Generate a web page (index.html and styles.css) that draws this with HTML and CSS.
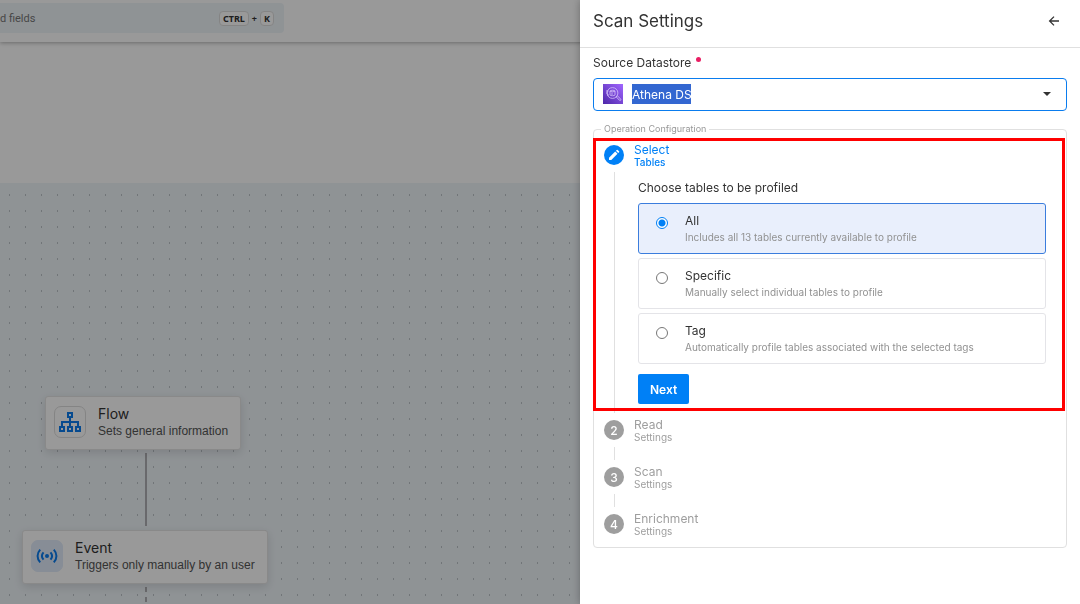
FILE: index.html
```html
<!DOCTYPE html>
<html lang="en">
<head>
<meta charset="utf-8">
<meta name="viewport" content="width=device-width, initial-scale=1">
<title>Scan Settings</title>
<link rel="stylesheet" href="styles.css">
</head>
<body>
<div class="page">
  <header class="topbar">
    <div class="search">
      <span class="search-text">d fields</span>
      <span class="shortcut"><kbd>CTRL</kbd><span>+</span><kbd>K</kbd></span>
    </div>
  </header>
  <div class="summary"></div>
  <main class="canvas">
    <div class="link"></div>
    <div class="link link-next"></div>
    <article class="node node-flow">
      <span class="node-icon">
        <svg width="24" height="24" viewBox="0 0 24 24" fill="none" stroke="currentColor" stroke-width="2"><path d="M10 3h4v4h-4zM2 17h4v4H2zM10 17h4v4h-4zM18 17h4v4h-4zM12 7v10M4 17v-5h16v5"/></svg>
      </span>
      <div><h2>Flow</h2><p>Sets general information</p></div>
    </article>
    <article class="node node-event">
      <span class="node-icon node-icon-tint">
        <svg width="24" height="24" viewBox="0 0 24 24" fill="none" stroke="currentColor" stroke-width="2"><circle cx="12" cy="12" r="2" fill="currentColor" stroke="none"/><path d="M8.500 8.300c-1.900 2.200-1.900 5.200 0 7.400M15.500 8.300c1.900 2.200 1.900 5.200 0 7.400M5.200 5.600c-3.500 3.800-3.500 9 0 12.800M18.800 5.600c3.500 3.800 3.500 9 0 12.800"/></svg>
      </span>
      <div><h2>Event</h2><p>Triggers only manually by an user</p></div>
    </article>
  </main>
</div>
<div class="scrim"></div>
<aside class="drawer">
  <header class="drawer-head">
    <h1>Scan Settings</h1>
    <button class="icon-button" type="button" aria-label="Back">
      <svg width="14" height="14" viewBox="0 0 14 14" fill="none" stroke="currentColor" stroke-width="1.300"><path d="M12 7H3M7 2.600L2.600 7L7 11.400"/></svg>
    </button>
  </header>
  <form class="drawer-body">
    <label class="field-label" for="source">Source Datastore<span class="required"></span></label>
    <div class="combo">
      <svg class="store-icon" width="20" height="20" viewBox="0 0 20 20" fill="none">
        <defs><linearGradient id="violet" x1="0" y1="1" x2="1" y2="0"><stop stop-color="#4d27a8"/><stop offset="1" stop-color="#a166ff"/></linearGradient></defs>
        <path fill="url(#violet)" d="M0 0h20v20H0z"/>
        <g stroke="#d9c6fb" stroke-width=".8"><circle cx="9.500" cy="9" r="5.400"/><path d="M13.200 12.800l1.200-1 3.200 3.200c.8.900-.3 2-1.200 1.200z"/><path d="M7 7c0-1 5-1 5 0v4c0 1-5 1-5 0zM7 7c0 1 5 1 5 0M3 7h2.500M3 9h2M4 11h2M9 8.500v2.500"/></g>
      </svg>
      <input id="source" class="combo-input" type="text" value="Athena DS">
      <button class="combo-toggle" type="button" aria-label="Show datastores"><svg width="8" height="4" viewBox="0 0 8 4"><path fill="currentColor" d="M0 0h8L4 4z"/></svg></button>
    </div>
    <fieldset class="config">
      <legend>Operation Configuration</legend>
      <div class="highlight"></div>
      <ol class="steps">
        <li class="step step-active">
          <span class="badge"><svg width="14" height="14" viewBox="0 0 14 14" fill="#fff"><path d="M2 9.700L8.200 3.500l2.300 2.300L4.300 12H2zM8.900 2.800l.9-.9q.5-.4.900 0l1.400 1.400q.4.400 0 .900l-.9.900z"/></svg></span>
          <div class="step-title"><strong>Select</strong><small>Tables</small></div>
          <span class="rail"></span>
          <div class="step-body">
            <p class="question" id="question">Choose tables to be profiled</p>
            <div class="options" role="radiogroup" aria-labelledby="question">
              <label class="option"><input type="radio" name="tables" checked><span class="option-text"><span class="option-name">All</span><span class="option-note">Includes all 13 tables currently available to profile</span></span></label>
              <label class="option"><input type="radio" name="tables"><span class="option-text"><span class="option-name">Specific</span><span class="option-note">Manually select individual tables to profile</span></span></label>
              <label class="option"><input type="radio" name="tables"><span class="option-text"><span class="option-name">Tag</span><span class="option-note">Automatically profile tables associated with the selected tags</span></span></label>
            </div>
            <button class="next" type="button">Next</button>
          </div>
        </li>
        <li class="step"><span class="badge">2</span><div class="step-title"><strong>Read</strong><small>Settings</small></div><span class="rail"></span></li>
        <li class="step"><span class="badge">3</span><div class="step-title"><strong>Scan</strong><small>Settings</small></div><span class="rail"></span></li>
        <li class="step"><span class="badge">4</span><div class="step-title"><strong>Enrichment</strong><small>Settings</small></div></li>
      </ol>
    </fieldset>
  </form>
</aside>
</body>
</html>
```
FILE: styles.css
```css
* { box-sizing: border-box; }
body, h1, h2, p, ol { margin: 0; padding: 0; }
body {
  font-family: Inter, "Liberation Sans", sans-serif;
  font-size: 12px;
  color: #333;
  background: #fff;
  overflow: hidden;
}
button, input { font: inherit; color: inherit; }

.page { display: flex; flex-direction: column; height: 100vh; }
.topbar {
  height: 42px;
  padding-top: 3px;
  background: #fff;
  box-shadow: 0 1px 4px rgba(0, 0, 0, .3);
}
.search {
  display: flex;
  align-items: center;
  justify-content: space-between;
  width: 284px;
  height: 30px;
  padding-right: 10px;
  border-radius: 0 4px 4px 0;
  background: #eff5f9;
}
.search-text { color: #777; font-family: Roboto, sans-serif; font-size: 11px; }
.shortcut { display: flex; align-items: center; gap: 3px; font: bold 9px "Noto Sans", sans-serif; }
kbd {
  padding: 0 3px;
  border: 1px solid #ddd;
  border-radius: 4px;
  background: #fff;
  font: bold 9px/13px "Noto Sans", sans-serif;
}
.summary { height: 141px; }
.canvas {
  position: relative;
  flex: 1;
  background: #eff5f9 url("data:image/svg+xml,%3Csvg xmlns='http://www.w3.org/2000/svg' width='16' height='16'%3E%3Cpath fill='%23bcc3c8' d='M9 11h1v2H9z'/%3E%3C/svg%3E");
}
.node {
  position: absolute;
  display: flex;
  align-items: center;
  gap: 12px;
  height: 54px;
  padding: 0 12px 2px 8px;
  border: 1px solid #e4e4e4;
  border-radius: 3px;
  background: #fff;
  box-shadow: 0 3px 10px rgba(0, 0, 0, .12);
  white-space: nowrap;
}
.node-flow { left: 45px; top: 213px; }
.node-event { left: 22px; top: 347px; }
.node-icon {
  display: grid;
  place-items: center;
  width: 32px;
  height: 32px;
  border: 1px solid #ddd;
  border-radius: 7px;
  color: #0a7cee;
}
.node-icon-tint { border-color: #e1ebfb; background: #e1ebfb; }
.node h2 { font-size: 14px; line-height: 18px; font-weight: 400; }
.node p { font-family: "Liberation Sans", sans-serif; font-size: 12px; line-height: 17px; color: #555; }
.link { position: absolute; left: 145px; top: 270px; width: 2px; height: 73px; background: #b0b0b4; }
.link-next {
  top: 404px;
  height: 20px;
  background: repeating-linear-gradient(#b0b0b4 0 5px, transparent 5px 10px);
}
.scrim { position: fixed; inset: 0; background: rgba(0, 0, 0, .4); }

.drawer {
  position: fixed;
  inset: 0 0 0 auto;
  width: 500px;
  background: #fff;
  box-shadow: 0 0 8px rgba(0, 0, 0, .3);
}
.drawer-head {
  display: flex;
  align-items: center;
  justify-content: space-between;
  height: 48px;
  padding: 0 19px 6px 13px;
  border-bottom: 1px solid #e0e0e0;
}
.drawer-head h1 { font-size: 17px; font-weight: 400; }
.icon-button, .combo-toggle { display: grid; place-items: center; padding: 0; border: 0; background: none; }
.drawer-body { padding: 6px 13px; }
.field-label { display: flex; gap: 5px; height: 18px; margin-bottom: 6px; line-height: 18px; }
.required { width: 5px; height: 5px; margin-top: 3px; border-radius: 50%; background: #e91e63; }
.combo {
  display: flex;
  align-items: center;
  height: 33px;
  padding: 0 15px 1px 9px;
  border: 1px solid #0a7cee;
  border-radius: 4px;
}
.combo-input {
  width: 59px;
  height: 20px;
  margin-left: 9px;
  padding: 0;
  border: 0;
  outline: 0;
  background: #3367d1;
  color: #fff;
}
.combo-toggle { margin-left: auto; }

.config {
  position: relative;
  min-width: 0;
  margin: 11px 0 0;
  padding: 7px 20px 8px 10px;
  border: 1px solid #e0e0e0;
  border-radius: 4px;
}
.config legend { margin-left: -3px; padding: 0 3px; font-size: 9px; line-height: 14px; color: #999; }
.highlight {
  position: absolute;
  top: 2px;
  left: -1px;
  right: 1px;
  height: 273px;
  border: 3px solid #f00;
  pointer-events: none;
}
.steps { list-style: none; }
.step {
  display: grid;
  grid-template-columns: 20px 1fr;
  column-gap: 10px;
  color: #9e9e9e;
}
.badge {
  display: grid;
  place-items: center;
  width: 20px;
  height: 20px;
  margin-top: 2px;
  border-radius: 50%;
  background: #9e9e9e;
  color: #fff;
  font-weight: 500;
}
.step-title { display: flex; flex-direction: column; height: 27px; }
.step-title strong { font-size: 12px; line-height: 14px; font-weight: 400; }
.step-title small { font-size: 10px; line-height: 11px; }
.rail { justify-self: center; width: 1px; height: 13px; margin: 2px 0 5px; background: #e0e0e0; }
.step-active { color: #0080f6; }
.step-active .badge { background: #0080f6; }
.step-active small { font-weight: 500; }
.step-active .rail { height: auto; }
.step-body { padding: 9px 0 14px 4px; color: #333; }
.question { font-size: 12px; line-height: 18px; }
.options { display: grid; gap: 4px; margin: 6px 0 10px; }
.option {
  display: flex;
  gap: 17px;
  height: 51px;
  padding: 8px 17px;
  border: 1px solid #e4e4e8;
  border-radius: 3px;
}
.option:has(:checked) { border-color: #3b7ddd; background: #e9effc; }
.option input {
  appearance: none;
  width: 12px;
  height: 12px;
  margin: 5px 0 0;
  border: 1px solid #777;
  border-radius: 50%;
  background: #fff;
}
.option input:checked { border-color: #0080f6; background: radial-gradient(circle, #0080f6 3px, #fff 4px); }
.option-text { display: flex; flex-direction: column; }
.option-name { line-height: 18px; }
.option-note { font-size: 10px; line-height: 14px; color: #919191; }
.next {
  display: block;
  height: 30px;
  padding: 0 12px;
  border: 0;
  border-radius: 2px;
  background: #0080f6;
  color: #fff;
  font-weight: 600;
}
```
